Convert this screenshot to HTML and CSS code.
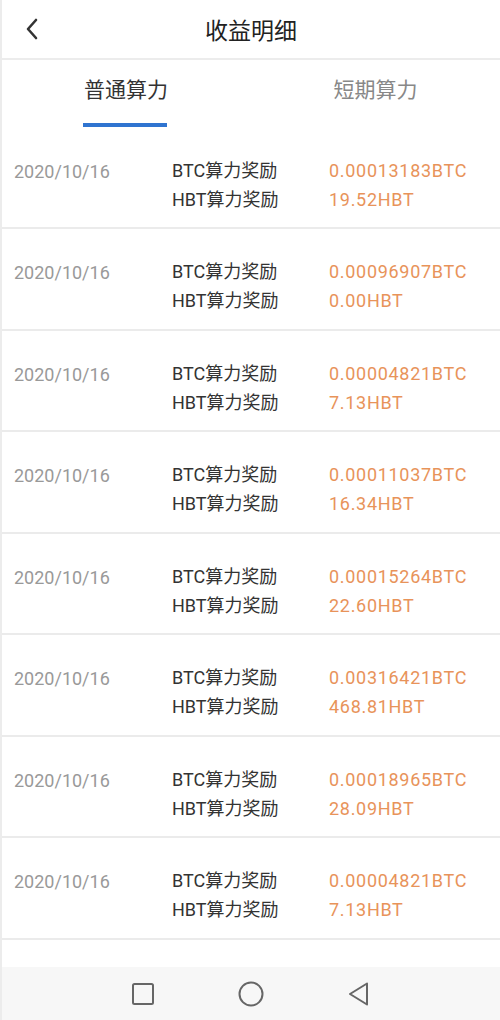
FILE: index.html
```html
<!DOCTYPE html>
<html lang="zh-CN">

<head>
    <meta charset="UTF-8">
    <meta name="viewport" content="width=device-width, initial-scale=1.0">
    <title>收益明细</title>
    <link rel="stylesheet" href="styles.css">
</head>

<body>
    <div class="page">
        <div class="header">
            <svg class="back" width="16" height="24" viewBox="0 0 16 24">
                <path d="M12 3 L4 12 L12 21" fill="none" stroke="#333" stroke-width="2.6" stroke-linecap="round" stroke-linejoin="round" />
            </svg>
            <span class="header-title">收益明细</span>
        </div>

        <ul class="tabs">
            <li class="active">普通算力</li>
            <li>短期算力</li>
        </ul>

        <ul class="list">
            <li class="row">
                <span class="date">2020/10/16</span>
                <div class="labels"><p>BTC算力奖励</p><p>HBT算力奖励</p></div>
                <div class="values"><p>0.00013183BTC</p><p>19.52HBT</p></div>
            </li>
            <li class="row">
                <span class="date">2020/10/16</span>
                <div class="labels"><p>BTC算力奖励</p><p>HBT算力奖励</p></div>
                <div class="values"><p>0.00096907BTC</p><p>0.00HBT</p></div>
            </li>
            <li class="row">
                <span class="date">2020/10/16</span>
                <div class="labels"><p>BTC算力奖励</p><p>HBT算力奖励</p></div>
                <div class="values"><p>0.00004821BTC</p><p>7.13HBT</p></div>
            </li>
            <li class="row">
                <span class="date">2020/10/16</span>
                <div class="labels"><p>BTC算力奖励</p><p>HBT算力奖励</p></div>
                <div class="values"><p>0.00011037BTC</p><p>16.34HBT</p></div>
            </li>
            <li class="row">
                <span class="date">2020/10/16</span>
                <div class="labels"><p>BTC算力奖励</p><p>HBT算力奖励</p></div>
                <div class="values"><p>0.00015264BTC</p><p>22.60HBT</p></div>
            </li>
            <li class="row">
                <span class="date">2020/10/16</span>
                <div class="labels"><p>BTC算力奖励</p><p>HBT算力奖励</p></div>
                <div class="values"><p>0.00316421BTC</p><p>468.81HBT</p></div>
            </li>
            <li class="row">
                <span class="date">2020/10/16</span>
                <div class="labels"><p>BTC算力奖励</p><p>HBT算力奖励</p></div>
                <div class="values"><p>0.00018965BTC</p><p>28.09HBT</p></div>
            </li>
            <li class="row">
                <span class="date">2020/10/16</span>
                <div class="labels"><p>BTC算力奖励</p><p>HBT算力奖励</p></div>
                <div class="values"><p>0.00004821BTC</p><p>7.13HBT</p></div>
            </li>
        </ul>

        <div class="navbar">
            <svg width="24" height="24" viewBox="0 0 24 24">
                <rect x="2" y="2" width="20" height="20" rx="1.5" fill="none" stroke="#666" stroke-width="2" />
            </svg>
            <svg width="26" height="26" viewBox="0 0 26 26">
                <circle cx="13" cy="13" r="11.5" fill="none" stroke="#666" stroke-width="2" />
            </svg>
            <svg width="24" height="24" viewBox="0 0 24 24">
                <path d="M20 1.5 L3 12 L20 22.5 Z" fill="none" stroke="#666" stroke-width="2" stroke-linejoin="round" />
            </svg>
        </div>
    </div>
</body>

</html>
```

FILE: styles.css
```css
* {
    margin: 0;
    padding: 0;
    list-style-type: none;
    box-sizing: border-box;
}

body {
    font-family: Roboto, "Noto Sans CJK SC", sans-serif;
    background: #fff;
    color: #333;
}

.page {
    width: 500px;
    height: 1020px;
    border-left: 2px solid #ececec;
    display: flex;
    flex-direction: column;
}

.header {
    height: 60px;
    border-bottom: 2px solid #ececec;
    display: flex;
    align-items: center;
    justify-content: center;
    position: relative;
}

.header .back {
    position: absolute;
    left: 22px;
    top: 17px;
}

.header-title {
    font-size: 23px;
    color: #222;
}

.tabs {
    height: 67.5px;
    display: flex;
}

.tabs li {
    flex: 1;
    display: flex;
    justify-content: center;
    padding-top: 15px;
    font-size: 21px;
    line-height: 30px;
    color: #888;
}

.tabs li.active {
    color: #333;
    position: relative;
}

.tabs li.active::after {
    content: "";
    position: absolute;
    left: 81px;
    width: 84px;
    bottom: 1px;
    height: 4px;
    background: #2f74d0;
}

.tabs li:first-child {
    justify-content: flex-start;
    padding-left: 82px;
}

.tabs li:last-child {
    justify-content: flex-start;
    padding-left: 83px;
}

.list {
    flex: 1;
}

.row {
    height: 101.5px;
    border-bottom: 2px solid #ebebeb;
    display: flex;
    padding-top: 28px;
    font-size: 18px;
    line-height: 29px;
}

.date {
    width: 170px;
    padding-left: 12px;
    color: #999;
    line-height: 31px;
}

.labels {
    width: 157px;
    color: #333;
}

.values {
    color: #e8935a;
    letter-spacing: 0.7px;
}

.navbar {
    height: 53px;
    background: #f7f7f7;
    display: flex;
    align-items: center;
    justify-content: center;
    gap: 83px;
}
```
